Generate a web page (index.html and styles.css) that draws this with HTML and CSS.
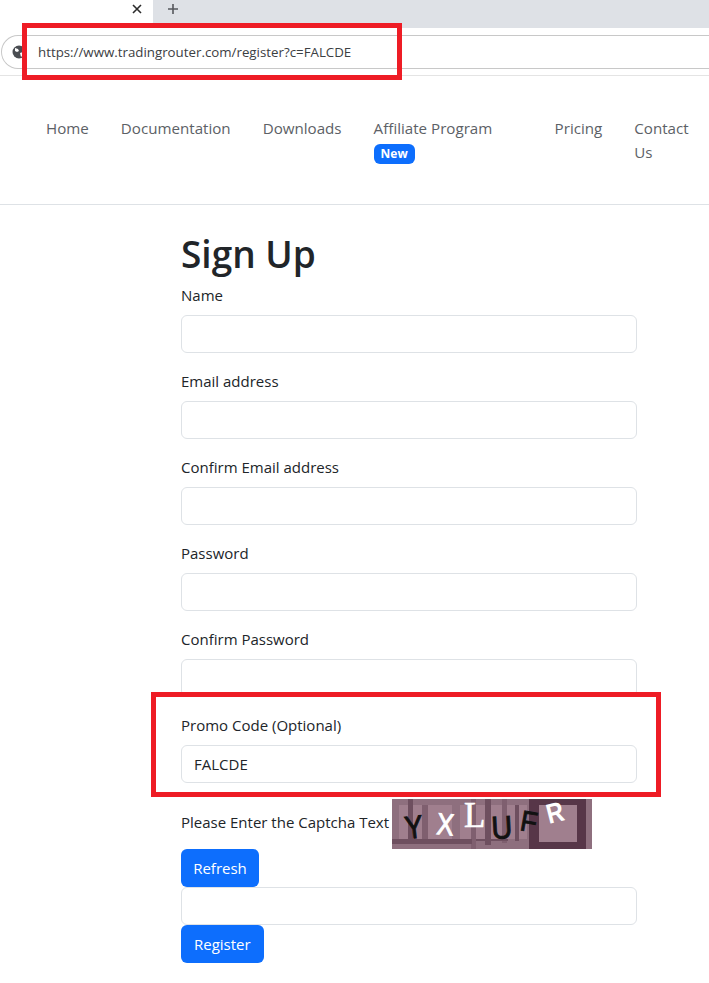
FILE: index.html
```html
<!DOCTYPE html>
<html lang="en">
<head>
    <meta charset="UTF-8">
    <meta name="viewport" content="width=device-width, initial-scale=1.0">
    <title>Sign Up</title>
    <link rel="stylesheet" href="styles.css">
</head>
<body>
    <div class="tabstrip">
        <div class="tab">
            <svg class="tab-close" width="10" height="10" viewBox="0 0 10 10"><path d="M1 1l8 8M9 1l-8 8" stroke="#2b2b2b" stroke-width="1.6"/></svg>
        </div>
        <div class="tab-rest">
            <svg class="tab-new" width="12" height="12" viewBox="0 0 12 12"><path d="M6 1v10M1 6h10" stroke="#55585d" stroke-width="1.6"/></svg>
        </div>
    </div>
    <div class="toolbar">
        <div class="omnibox">
            <svg class="globe" width="14" height="14" viewBox="0 0 14 14"><circle cx="7" cy="7" r="6.5" fill="#4a4d52"/><path d="M3 3l3 1 1 2-2 1-2-1zM8 8l3-1 1 2-3 3z" fill="#fff"/></svg>
            <span class="url">https://www.tradingrouter.com/register?c=FALCDE</span>
        </div>
    </div>

    <div class="navbar">
        <a class="nav-link" href="#">Home</a>
        <a class="nav-link" href="#">Documentation</a>
        <a class="nav-link" href="#">Downloads</a>
        <a class="nav-link nav-affiliate" href="#">Affiliate Program <span class="badge">New</span></a>
        <a class="nav-link" href="#">Pricing</a>
        <a class="nav-link nav-contact" href="#">Contact Us</a>
    </div>

    <div class="container">
        <h1>Sign Up</h1>
        <form>
            <div class="form-group">
                <label for="name">Name</label>
                <input type="text" id="name">
            </div>
            <div class="form-group">
                <label for="email">Email address</label>
                <input type="text" id="email">
            </div>
            <div class="form-group">
                <label for="email2">Confirm Email address</label>
                <input type="text" id="email2">
            </div>
            <div class="form-group">
                <label for="password">Password</label>
                <input type="text" id="password">
            </div>
            <div class="form-group">
                <label for="password2">Confirm Password</label>
                <input type="text" id="password2">
            </div>
            <div class="form-group">
                <label for="promo">Promo Code (Optional)</label>
                <input type="text" id="promo" value="FALCDE">
            </div>
            <div class="captcha-row">
                <span class="captcha-label">Please Enter the Captcha Text</span>
                <svg class="captcha" width="200" height="50" viewBox="0 0 200 50">
                    <rect width="200" height="50" fill="#8e6f7e"/>
                    <rect x="7" y="6" width="128" height="34" fill="#a07f8e"/>
                    <rect x="16" y="0" width="5" height="40" fill="#6e4f5f"/>
                    <rect x="30" y="6" width="6" height="34" fill="#7f5f6f"/>
                    <rect x="60" y="6" width="8" height="34" fill="#8e6f7e"/>
                    <rect x="79" y="0" width="5" height="50" fill="#7f5f6f"/>
                    <rect x="93" y="0" width="6" height="46" fill="#6e4f5f"/>
                    <rect x="110" y="0" width="5" height="44" fill="#7f5f6f"/>
                    <rect x="123" y="6" width="4" height="36" fill="#6e4f5f"/>
                    <rect x="0" y="40" width="80" height="5" fill="#6e4f5f"/>
                    <rect x="84" y="40" width="32" height="2" fill="#6e4f5f"/>
                    <rect x="137" y="0" width="57" height="50" fill="#573648"/>
                    <rect x="147" y="6" width="38" height="37" fill="#a07f8e"/>
                    <text class="cap-letter cap-thick" transform="translate(14 40) rotate(-6) scale(.85 1)" fill="#111" stroke="#111">Y</text>
                    <text class="cap-letter cap-thick" transform="translate(44 35) rotate(5) scale(.8 .95)" fill="#fff" stroke="#fff">X</text>
                    <text class="cap-letter cap-serif" transform="translate(72 28)" fill="#fff" stroke="#fff">L</text>
                    <text class="cap-letter cap-thick" transform="translate(100 40) rotate(-3) scale(.9 1)" fill="#111" stroke="#111">U</text>
                    <text class="cap-letter cap-thick" transform="translate(127 31) rotate(10) scale(.85 .9)" fill="#111" stroke="#111">F</text>
                    <text class="cap-letter cap-bold" transform="translate(157 25) rotate(-14) scale(.85 1)" fill="#fff">R</text>
                </svg>
            </div>
            <button type="button" class="btn btn-refresh">Refresh</button>
            <input type="text" class="captcha-input">
            <button type="submit" class="btn">Register</button>
        </form>
    </div>

    <div class="redbox redbox-url"></div>
    <div class="redbox redbox-promo"></div>
</body>
</html>
```

FILE: styles.css
```css
* {
    margin: 0;
    padding: 0;
    box-sizing: border-box;
}

body {
    background-color: white;
    color: #212529;
    font-family: 'Open Sans', 'Noto Sans', sans-serif;
    font-size: 15px;
    line-height: 24px;
    position: relative;
    min-height: 983px;
    overflow: hidden;
}

.tabstrip {
    display: flex;
    height: 28px;
    background-color: #dee1e6;
}

.tab {
    width: 153px;
    background-color: white;
    border-bottom-right-radius: 6px;
    display: flex;
    justify-content: flex-end;
    align-items: center;
    padding: 0 11px 10px 0;
}

.tab-rest {
    flex: 1;
    padding: 3px 0 0 14px;
}

.tab-new {
    display: block;
}

.toolbar {
    height: 48px;
    background-color: white;
    padding-top: 7px;
    border-bottom: 1px solid #e4e4e4;
}

.omnibox {
    margin-left: 1px;
    height: 34px;
    border: 1px solid #c8c8c8;
    border-right: none;
    border-radius: 17px 0 0 17px;
    display: flex;
    align-items: center;
    padding-left: 10px;
}

.url {
    margin-left: 12px;
    font-size: 13.3px;
    color: #3c4043;
}

.navbar {
    display: flex;
    align-items: flex-start;
    height: 129px;
    padding: 40px 0 0 38px;
    border-bottom: 1px solid #dee2e6;
}

.nav-link {
    display: block;
    padding: 0 8px;
    margin-right: 16px;
    color: #5c6166;
    font-size: 15.15px;
    text-decoration: none;
}

.nav-affiliate {
    width: 165px;
}

.nav-contact {
    width: 74px;
    margin-right: 0;
}

.badge {
    display: inline-block;
    background-color: #0d6efd;
    color: white;
    font-size: 12px;
    font-weight: bold;
    line-height: 12px;
    padding: 4px 7px;
    border-radius: 6px;
}

.container {
    width: 456px;
    margin-left: 181px;
}

h1 {
    font-size: 37px;
    font-weight: 600;
    line-height: 48px;
    margin-top: 25px;
    margin-bottom: 5px;
}

.form-group {
    margin-bottom: 16px;
}

label {
    display: block;
    margin-bottom: 8px;
}

input {
    display: block;
    width: 100%;
    height: 38px;
    padding: 6px 12px;
    border: 1px solid #dee2e6;
    border-radius: 6px;
    font-family: inherit;
    font-size: 15px;
    color: #212529;
}

.captcha-row {
    display: flex;
    align-items: center;
    height: 50px;
}

.captcha-label {
    margin-right: 4px;
    margin-bottom: 4px;
    width: 207px;
    white-space: nowrap;
}

.captcha {
    display: block;
}

.cap-letter {
    font-family: 'Liberation Sans', sans-serif;
    font-size: 32px;
}

.cap-thick {
    stroke-width: 1;
}

.cap-serif {
    font-family: 'Liberation Serif', serif;
    font-size: 35px;
    stroke-width: 0.6;
}

.cap-bold {
    font-size: 28px;
    font-weight: bold;
}

.btn {
    display: block;
    background-color: #0d6efd;
    color: white;
    border: none;
    border-radius: 6px;
    height: 38px;
    padding: 0 13px;
    font-family: inherit;
    font-size: 15px;
}

.btn-refresh {
    width: 78px;
    padding: 0;
}

.redbox {
    position: absolute;
    border: 5px solid #ee1c25;
}

.redbox-url {
    left: 22px;
    top: 23px;
    width: 380px;
    height: 57px;
}

.redbox-promo {
    left: 151px;
    top: 692px;
    width: 510px;
    height: 105px;
}
```
